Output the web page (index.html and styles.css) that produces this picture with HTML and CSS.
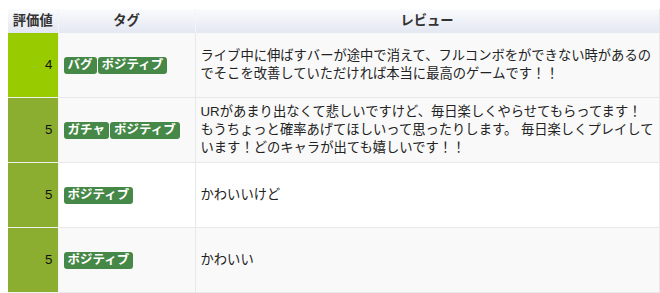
FILE: index.html
```html
<!DOCTYPE html>
<html lang="ja">
<head>
<meta charset="utf-8">
<link rel="stylesheet" href="styles.css">
</head>
<body>
<table class="reviews">
  <colgroup>
    <col class="c-score">
    <col class="c-tags">
    <col class="c-review">
  </colgroup>
  <thead>
    <tr>
      <th>評価値</th>
      <th>タグ</th>
      <th>レビュー</th>
    </tr>
  </thead>
  <tbody>
    <tr class="alt">
      <td class="score s4">4</td>
      <td class="tags"><span class="label">バグ</span><span class="label">ポジティブ</span></td>
      <td class="review">ライブ中に伸ばすバーが途中で消えて、フルコンボをができない時があるのでそこを改善していただければ本当に最高のゲームです！！</td>
    </tr>
    <tr class="alt">
      <td class="score s5">5</td>
      <td class="tags"><span class="label">ガチャ</span><span class="label">ポジティブ</span></td>
      <td class="review">URがあまり出なくて悲しいですけど、毎日楽しくやらせてもらってます！もうちょっと確率あげてほしいって思ったりします。 毎日楽しくプレイしています！どのキャラが出ても嬉しいです！！</td>
    </tr>
    <tr>
      <td class="score s5">5</td>
      <td class="tags"><span class="label">ポジティブ</span></td>
      <td class="review">かわいいけど</td>
    </tr>
    <tr class="alt">
      <td class="score s5">5</td>
      <td class="tags"><span class="label">ポジティブ</span></td>
      <td class="review">かわいい</td>
    </tr>
  </tbody>
</table>
</body>
</html>
```
FILE: styles.css
```css
html, body {
  background: #ffffff;
}
body {
  margin: 9px 0 0 8px;
  font-family: "Liberation Sans", "Noto Sans CJK JP", sans-serif;
  font-size: 13.3px;
  color: #222;
}
.reviews {
  border-collapse: collapse;
  width: 651px;
  table-layout: fixed;
}
.c-score { width: 50px; }
.c-tags { width: 137px; }
.c-review { width: 464px; }

.reviews th {
  height: 24px;
  padding: 0;
  font-weight: bold;
  font-size: 13.3px;
  color: #333;
  text-align: center;
  white-space: nowrap;
  background: linear-gradient(#fafbfd, #e3e7f1);
  border-left: 1px solid #f2f4f8;
  border-right: 1px solid #f2f4f8;
  line-height: 24px;
}
.reviews th:first-child { border-left: none; }
.reviews th:last-child { border-right: 1px solid #e6e6e6; }

.reviews td {
  height: 64px;
  padding: 0 5px;
  vertical-align: middle;
  background: #ffffff;
  border: 1px solid #e8e8e8;
  border-top: none;
  line-height: 18px;
}
.reviews td:first-child { border-left: none; }
.reviews tr.alt td { background: #f9f9f9; }

.reviews td.score {
  text-align: right;
  color: #111;
  border-right: 1px solid #f2f2f2;
  border-bottom: 1px solid #f0f0f0;
}
.reviews tr td.s4 { background: #99cc00; }
.reviews tr td.s5 { background: #8cae30; }

.tags {
  white-space: nowrap;
}
.label {
  display: inline-block;
  background: #468847;
  color: #fff;
  font-weight: bold;
  font-size: 12.5px;
  line-height: 17px;
  padding: 0 4px;
  border-radius: 3px;
  margin-right: 1px;
  vertical-align: middle;
}
.review {
  color: #222;
}
```
